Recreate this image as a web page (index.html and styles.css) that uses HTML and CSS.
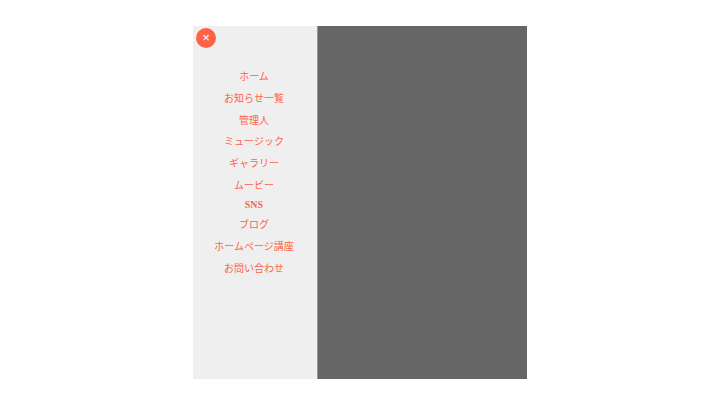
FILE: index.html
```html
<!DOCTYPE html>
<html lang="ja">
<head>
    <meta charset="utf-8">
    <title>メニュー</title>
    <link rel="stylesheet" href="styles.css">
</head>
<body>
    <div class="screen">
        <div class="sidebar">
            <button class="close-btn">&times;</button>
            <ul class="menu">
                <li><a href="#">ホーム</a></li>
                <li><a href="#">お知らせ一覧</a></li>
                <li><a href="#">管理人</a></li>
                <li><a href="#">ミュージック</a></li>
                <li><a href="#">ギャラリー</a></li>
                <li><a href="#">ムービー</a></li>
                <li class="latin"><a href="#">SNS</a></li>
                <li><a href="#">ブログ</a></li>
                <li><a href="#">ホームページ講座</a></li>
                <li><a href="#">お問い合わせ</a></li>
            </ul>
        </div>
        <div class="backdrop"></div>
    </div>
</body>
</html>
```

FILE: styles.css
```css
* {
    box-sizing: border-box;
}

body {
    margin: 0;
    background-color: #fff;
    font-family: "Liberation Serif", "Noto Sans CJK JP", serif;
}

.screen {
    display: flex;
    width: 334px;
    height: 353px;
    margin: 26px 0 0 193px;
}

.sidebar {
    width: 124px;
    padding: 2px 0 0 3px;
    background-color: #efefef;
}

.close-btn {
    display: block;
    width: 20px;
    height: 20px;
    padding: 0;
    border: none;
    border-radius: 50%;
    background-color: #ff6347;
    color: #fff;
    font-family: "Liberation Sans", sans-serif;
    font-size: 13px;
    line-height: 20px;
    text-align: center;
}

.menu {
    list-style: none;
    margin: 16.6px 0 0;
    padding: 0 5px 0 0;
    text-align: center;
    font-size: 10px;
}

.menu li {
    padding: 3.4px 0;
}

.menu .latin a {
    font-weight: bold;
}

.menu a {
    color: #ff6347;
    text-decoration: none;
}

.backdrop {
    flex: 1;
    background-color: #666;
    border-left: 1px solid #999;
}
```
